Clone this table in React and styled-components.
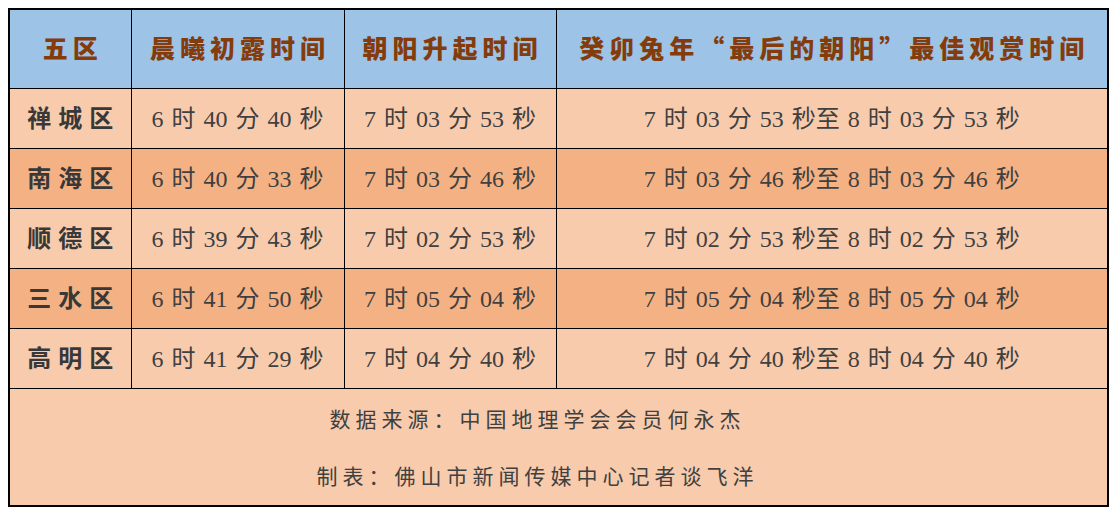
import React from "react";
import styled, { createGlobalStyle } from "styled-components";

const Global = createGlobalStyle`
  html, body { margin: 0; padding: 0; background: #ffffff; }
  body { padding: 8px; }
`;

const Table = styled.table`
  width: 1099px;
  border-collapse: collapse;
  table-layout: fixed;
  border: 2px solid #000;
`;

const HeadRow = styled.tr`
  height: 79px;
  background: #9dc3e6;
`;

const Th = styled.th`
  border: 1px solid #000;
  padding: 0 0 4px 5px;
  text-align: center;
  font-family: "Noto Sans CJK SC", sans-serif;
  font-weight: 900;
  font-size: 25px;
  letter-spacing: 5px;
  color: #843c0c;
  white-space: nowrap;
`;

const Row = styled.tr`
  height: 60px;
  background: ${(p) => (p.$dark ? "#f4b183" : "#f8cbad")};
`;

const NameCell = styled.td`
  border: 1px solid #000;
  padding: 0 0 3px 7px;
  text-align: center;
  font-family: "Noto Sans CJK SC", sans-serif;
  font-weight: 700;
  font-size: 24px;
  letter-spacing: 7px;
  color: #383838;
`;

const Cell = styled.td`
  border: 1px solid #000;
  padding: 0 0 3px;
  text-align: center;
  font-family: "Liberation Serif", "Noto Sans CJK SC", serif;
  font-weight: 400;
  font-size: 24px;
  color: #404040;
  white-space: nowrap;
  word-spacing: 2px;
`;

const FootRow = styled.tr`
  height: 118px;
  background: #f8cbad;
`;

const FootCell = styled.td`
  border: 1px solid #000;
  padding: 0 42px 0 0;
  text-align: center;
  font-family: "Noto Sans CJK SC", sans-serif;
  font-weight: 400;
  font-size: 21px;
  letter-spacing: 5px;
  color: #404040;
`;

const FootLines = styled.div`
  display: flex;
  flex-direction: column;
  align-items: center;
  gap: 27px;
  line-height: 30px;
`;

const rows = [
  ["禅城区", "6 时 40 分 40 秒", "7 时 03 分 53 秒", "7 时 03 分 53 秒至 8 时 03 分 53 秒"],
  ["南海区", "6 时 40 分 33 秒", "7 时 03 分 46 秒", "7 时 03 分 46 秒至 8 时 03 分 46 秒"],
  ["顺德区", "6 时 39 分 43 秒", "7 时 02 分 53 秒", "7 时 02 分 53 秒至 8 时 02 分 53 秒"],
  ["三水区", "6 时 41 分 50 秒", "7 时 05 分 04 秒", "7 时 05 分 04 秒至 8 时 05 分 04 秒"],
  ["高明区", "6 时 41 分 29 秒", "7 时 04 分 40 秒", "7 时 04 分 40 秒至 8 时 04 分 40 秒"],
];

export default function App() {
  return (
    <>
      <Global />
      <Table>
        <colgroup>
          <col style={{ width: 122 }} />
          <col style={{ width: 213 }} />
          <col style={{ width: 212 }} />
          <col style={{ width: 552 }} />
        </colgroup>
        <thead>
          <HeadRow>
            <Th>五区</Th>
            <Th>晨曦初露时间</Th>
            <Th>朝阳升起时间</Th>
            <Th>癸卯兔年“最后的朝阳”最佳观赏时间</Th>
          </HeadRow>
        </thead>
        <tbody>
          {rows.map((r, i) => (
            <Row key={r[0]} $dark={i % 2 === 1}>
              <NameCell>{r[0]}</NameCell>
              <Cell>{r[1]}</Cell>
              <Cell>{r[2]}</Cell>
              <Cell>{r[3]}</Cell>
            </Row>
          ))}
          <FootRow>
            <FootCell colSpan={4}>
              <FootLines>
                <span>数据来源：中国地理学会会员何永杰</span>
                <span>制表：佛山市新闻传媒中心记者谈飞洋</span>
              </FootLines>
            </FootCell>
          </FootRow>
        </tbody>
      </Table>
    </>
  );
}
